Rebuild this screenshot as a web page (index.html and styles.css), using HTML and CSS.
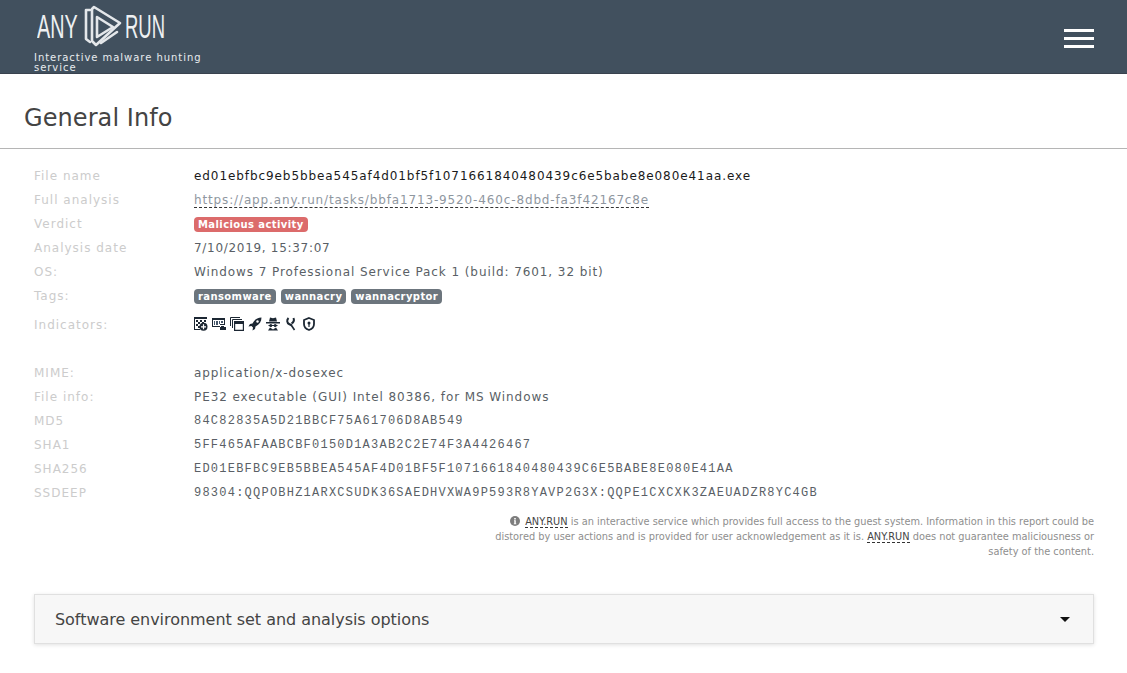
FILE: index.html
```html
<!DOCTYPE html>
<html lang="en">
<head>
<meta charset="utf-8">
<title>General Info</title>
<link rel="stylesheet" href="styles.css">
</head>
<body>
<header class="topbar">
  <div class="brand">
    <div class="logo">
      <span class="logo-text">ANY</span>
      <svg class="logo-mark" width="40" height="44" viewBox="0 0 40 44" fill="none" stroke="#e4e7ea" stroke-width="2.600" stroke-linejoin="round" stroke-linecap="round">
        <path d="M6 6H2V35L6 38"/>
        <path d="M8 36V5L10 3L36 19L12 41L8 37"/>
        <path d="M13 33V13L29 23Z"/>
        <path d="M17 39L33 28"/>
      </svg>
      <span class="logo-text logo-run">RUN</span>
    </div>
    <div class="tagline">Interactive malware hunting service</div>
  </div>
  <div class="burger"><span></span><span></span><span></span></div>
</header>
<main>
  <h1 class="page-title">General Info</h1>
  <section class="info">
    <div class="label">File name</div><div class="value strong">ed01ebfbc9eb5bbea545af4d01bf5f1071661840480439c6e5babe8e080e41aa.exe</div>
    <div class="label">Full analysis</div><div class="value"><a class="link">https://app.any.run/tasks/bbfa1713-9520-460c-8dbd-fa3f42167c8e</a></div>
    <div class="label">Verdict</div><div class="value"><span class="badge danger">Malicious activity</span></div>
    <div class="label">Analysis date</div><div class="value date">7/10/2019, 15:37:07</div>
    <div class="label">OS:</div><div class="value">Windows 7 Professional Service Pack 1 (build: 7601, 32 bit)</div>
    <div class="label">Tags:</div><div class="value tags"><span class="badge">ransomware</span><span class="badge">wannacry</span><span class="badge">wannacryptor</span></div>
    <div class="label ind-row">Indicators:</div>
    <div class="value ind-row icons">
      <svg width="14" height="14" viewBox="0 0 14 14"><path fill="#1c2733" d="M0 0h13v2H0zM0 2h1v10h5v1H0z"/><path fill="#1c2733" d="M2 3h2v2H2zM6 3h2v2H6zM10 3h2v2h-2zM4 5h2v2H4zM8 5h2v2H8zM2 7h2v2H2zM4 9h2v2H4z"/><circle cx="9.500" cy="9.800" r="4" fill="#1c2733"/><path stroke="#fff" stroke-width="1.200" d="M7 9.800h5M9.500 7.300v5"/></svg>
      <svg width="14" height="14" viewBox="0 0 14 14"><path fill="#1c2733" d="M0 1h13v7H8v2H0z"/><path fill="#fff" d="M1 3h11v4H8v2H1z"/><path fill="#45566a" d="M2 4h1v4H2zM4 4h2v4H4zM7 4h1v3H7zM9 4h2v2H9z"/><path fill="#1c2733" d="M9 9h3v1h2v3H8v-3h1z"/></svg>
      <svg width="14" height="14" viewBox="0 0 14 14" fill="none" stroke="#1c2733"><path d="M.5 9V.5H10M2.500 11V2.500H12"/><path stroke-width="1.200" d="M4.600 4.600h8.800v8.800H4.600z"/><path fill="#1c2733" d="M4.500 5h9v1.500h-9z"/></svg>
      <svg width="14" height="14" viewBox="0 0 14 14"><path fill="#1c2733" d="M13.500.5C9.500.5 6.500 2.500 4.500 6.500L2 7 .5 9.500l3-.5 1.500 1.500-.5 3L7 12l.5-2.500C11.500 7.500 13.500 4.500 13.500.5z"/><circle cx="9.500" cy="4.500" r="1.200" fill="#fff"/></svg>
      <svg width="14" height="14" viewBox="0 0 14 14"><path fill="#1c2733" d="M4 .5l3 .7 3-.7 1 4H3z"/><path fill="#1c2733" d="M0 5h14v1.500H0z"/><path fill="none" stroke="#1c2733" d="M2.500 8.500h9"/><circle cx="4.800" cy="8.500" r="1.500" fill="#1c2733"/><circle cx="9.200" cy="8.500" r="1.500" fill="#1c2733"/><path fill="#1c2733" d="M2 13.500l2-3 3 2 3-2 2 3z"/></svg>
      <svg width="14" height="14" viewBox="0 0 14 14" fill="none" stroke="#1c2733" stroke-width="2"><path d="M4.500 1C2.500 3 3 6 5 7l3 1.500"/><path d="M9.500 1c1 2.500.5 4-2 5.500"/><path stroke-width="1.600" d="M7.500 8.500L10.500 13"/></svg>
      <svg width="14" height="14" viewBox="0 0 14 14" fill="none" stroke="#1c2733" stroke-width="1.800"><path d="M7 1l5 2v4c0 3-2 5-5 6-3-1-5-3-5-6V3z"/><circle cx="7" cy="6" r="1.500" fill="#1c2733" stroke="none"/><path stroke-width="1.200" d="M7 7v3"/></svg>
    </div>
    <div class="label spaced">MIME:</div><div class="value spaced">application/x-dosexec</div>
    <div class="label">File info:</div><div class="value">PE32 executable (GUI) Intel 80386, for MS Windows</div>
    <div class="label">MD5</div><div class="value mono">84C82835A5D21BBCF75A61706D8AB549</div>
    <div class="label">SHA1</div><div class="value mono">5FF465AFAABCBF0150D1A3AB2C2E74F3A4426467</div>
    <div class="label">SHA256</div><div class="value mono">ED01EBFBC9EB5BBEA545AF4D01BF5F1071661840480439C6E5BABE8E080E41AA</div>
    <div class="label">SSDEEP</div><div class="value mono">98304:QQPOBHZ1ARXCSUDK36SAEDHVXWA9P593R8YAVP2G3X:QQPE1CXCXK3ZAEUADZR8YC4GB</div>
  </section>
  <p class="notice">
    <svg class="info-icon" width="10" height="10" viewBox="0 0 10 10"><circle cx="5" cy="5" r="5" fill="#7d7d7d"/><path fill="#fff" d="M4.200 2h1.600v1.500H4.200zM4 4.300h1.800V7.500h.5V8.300H3.800V7.500h.5V5H4z"/></svg>
    <span class="abbr">ANY.RUN</span> is an interactive service which provides full access to the guest system. Information in this report could be distored by user actions and is provided for user acknowledgement as it is. <span class="abbr">ANY.RUN</span> does not guarantee maliciousness or safety of the content.
  </p>
  <div class="panel">
    <span class="panel-title">Software environment set and analysis options</span>
    <span class="caret"></span>
  </div>
</main>
</body>
</html>
```
FILE: styles.css
```css
* { box-sizing: border-box; }
html, body { margin: 0; padding: 0; }
body {
  background: #fff;
  color: #4a5560;
  font-family: "DejaVu Sans", sans-serif;
  font-size: 12px;
  height: 673px;
  overflow: hidden;
}
.topbar {
  height: 74px;
  background: #41505e;
  border-bottom: 1px solid #39424e;
  display: flex;
  justify-content: space-between;
  align-items: flex-start;
  padding: 0 33px 0 34px;
}
.brand { width: 180px; }
.logo {
  display: flex;
  align-items: center;
  height: 51px;
  padding: 2px 0 0 3px;
}
.logo-text {
  font-family: "Liberation Sans", sans-serif;
  font-size: 33px;
  line-height: 40px;
  color: #eef0f2;
  display: inline-block;
  width: 41px;
  transform: scaleX(.6);
  transform-origin: left center;
  white-space: nowrap;
}
.logo-run { transform: scaleX(.56); }
.logo-mark { margin: -2px 1px 0 6px; flex: none; }
.tagline {
  color: #e8ecef;
  font-size: 10px;
  line-height: 10px;
  letter-spacing: .96px;
  margin-top: 2px;
}
.burger {
  margin-top: 29px;
  width: 30px;
  display: flex;
  flex-direction: column;
  gap: 5px;
}
.burger span { display: block; height: 3px; background: #fff; }
.page-title {
  margin: 0;
  height: 75px;
  padding: 0 24px;
  border-bottom: 1px solid #b5b5b5;
  font-size: 24px;
  font-weight: 400;
  color: #444;
  line-height: 88px;
  letter-spacing: .08px;
}
.info {
  display: grid;
  grid-template-columns: 160px 1fr;
  padding: 15px 34px 0;
  letter-spacing: 1px;
  line-height: 24px;
}
.label { color: #ccc; height: 24px; }
.value { color: #5a5f66; white-space: nowrap; letter-spacing: .92px; height: 24px; }
.strong { color: #1a1a1a; }
.date { letter-spacing: .7px; }
.link {
  color: #8f979f;
  text-decoration: none;
  border-bottom: 1px dashed #333;
  letter-spacing: .86px;
}
.badge {
  display: inline-block;
  background: #6c757d;
  color: #fff;
  font-size: 10px;
  font-weight: 700;
  line-height: 15px;
  padding: 0 4px;
  border-radius: 4px;
  vertical-align: 0;
  letter-spacing: .4px;
}
.danger { background: #dc6b6b; }
.tags { display: flex; gap: 5px; align-items: center; }
.ind-row { height: 34px; line-height: 34px; }
.icons { display: flex; gap: 4px; align-items: center; padding-bottom: 2px; }
.icons svg { display: block; flex: none; }
.spaced { margin-top: 19px; }
.mono {
  font-family: "Liberation Mono", monospace;
  font-size: 12px;
  letter-spacing: 1.230px;
}
.notice {
  margin: 9px 33px 0 auto;
  width: 600px;
  font-size: 9.800px;
  line-height: 15px;
  color: #8e8e8e;
  text-align: right;
}
.info-icon { vertical-align: -1px; margin-right: 2px; }
.abbr { color: #444; border-bottom: 1px dashed #333; }
.panel {
  margin: 35px 33px 0 34px;
  height: 50px;
  background: #f7f7f7;
  border: 1px solid #e0e0e0;
  box-shadow: 0 1px 4px rgba(0,0,0,.12);
  display: flex;
  align-items: center;
  justify-content: space-between;
  padding: 0 23px 0 20px;
}
.panel-title { font-size: 16px; color: #444; letter-spacing: -.04px; }
.caret {
  width: 0;
  height: 0;
  border-left: 5px solid transparent;
  border-right: 5px solid transparent;
  border-top: 5px solid #111;
}
```
